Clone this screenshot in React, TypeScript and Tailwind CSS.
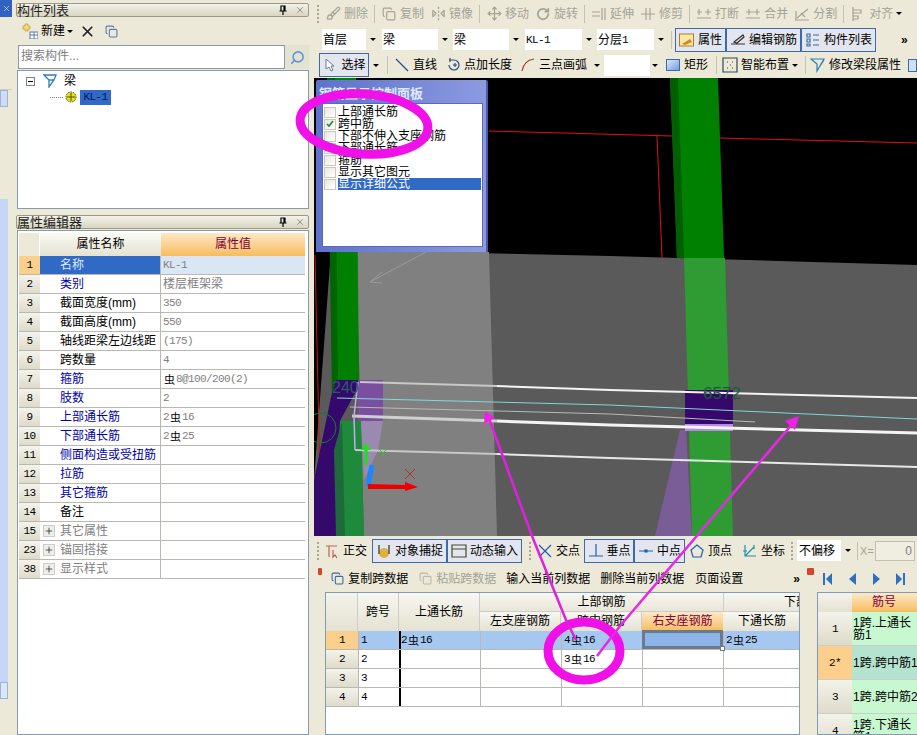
import type { ReactNode } from 'react';
import { Brush, ChevronDown, Copy, FlipHorizontal2, Move, Plus, RotateCw, Search, X } from 'lucide-react';

const FONT = "font-['Liberation_Sans','Noto_Sans_CJK_SC',sans-serif]";

function Num({ children }: { children: ReactNode }) {
  return <span className="font-['Liberation_Mono','Noto_Sans_CJK_SC',monospace] text-[11px] tracking-[-0.6px]">{children}</span>;
}

function Bar({ children }: { children: ReactNode }) {
  return <span className="font-['Noto_Sans_CJK_SC',sans-serif] text-[11px] text-black mx-[1px]">{children}</span>;
}

function Sep() {
  return <div className="w-[1px] h-[18px] shrink-0 bg-[#c4c1ac]" />;
}

function Grip() {
  return <div className="w-[2px] h-[18px] shrink-0 border-l-2 border-dotted border-[#a8a690]" />;
}

function Arrow({ className = '' }: { className?: string }) {
  return (
    <div className={`flex items-center justify-center shrink-0 ${className}`}>
      <div className="w-0 h-0 border-x-[3px] border-t-[3px] border-x-transparent border-t-black" />
    </div>
  );
}

function Tool({ icon, label, gray, className = '' }: { icon: ReactNode; label: string; gray?: boolean; className?: string }) {
  return (
    <div className={`flex items-center gap-[3px] shrink-0 whitespace-nowrap ${gray ? 'text-[#a3a396]' : 'text-black'} ${className}`}>
      <div className="w-[16px] h-[16px] flex items-center justify-center shrink-0">{icon}</div>
      <span>{label}</span>
    </div>
  );
}

function Toggle({ icon, label, className = '' }: { icon: ReactNode; label: string; className?: string }) {
  return (
    <div className={`flex items-center justify-center gap-[3px] h-[24px] shrink-0 border border-[#3f6aa8] bg-[#e3e6ee] whitespace-nowrap ${className}`}>
      <div className="w-[16px] h-[16px] flex items-center justify-center shrink-0">{icon}</div>
      <span>{label}</span>
    </div>
  );
}

function Dropdown({ label, className = '' }: { label: ReactNode; className?: string }) {
  return (
    <div className={`flex items-center h-[21px] shrink-0 ${className}`}>
      <div className="flex-1 h-full bg-white pl-[1px] flex items-center whitespace-nowrap overflow-hidden">{label}</div>
      <Arrow className="w-[14px]" />
    </div>
  );
}

function Lines({ d, color = '#a3a396' }: { d: string; color?: string }) {
  return (
    <svg width="16" height="16" viewBox="0 0 16 16" fill="none" stroke={color} strokeWidth="1.2">
      <path d={d} />
    </svg>
  );
}

function TitleBar({ title }: { title: string }) {
  return (
    <div className="h-[14px] mr-[1px] flex items-center justify-between rounded-[2px] border border-[#9a9a88] bg-gradient-to-b from-[#f4f3ea] to-[#d8d5c0] text-[13px] leading-[13px] text-[#222]">
      <span>{title}</span>
      <div className="flex items-center gap-[8px] pr-[3px]">
        <svg width="8" height="10" viewBox="0 0 8 10" fill="none" stroke="#000" strokeWidth="1.2">
          <path d="M2 1h4v5H2zM0.5 6h7M4 6v4M5 1v5" />
        </svg>
        <X size={10} strokeWidth={1.2} color="#444" />
      </div>
    </div>
  );
}

const props: { i: string; name: string; val?: ReactNode; tone: 'blue' | 'black' | 'gray'; plus?: boolean }[] = [
  { i: '1', name: '名称', val: <Num>KL-1</Num>, tone: 'black' },
  { i: '2', name: '类别', val: '楼层框架梁', tone: 'blue' },
  { i: '3', name: '截面宽度(mm)', val: <Num>350</Num>, tone: 'black' },
  { i: '4', name: '截面高度(mm)', val: <Num>550</Num>, tone: 'black' },
  { i: '5', name: '轴线距梁左边线距', val: <Num>(175)</Num>, tone: 'black' },
  { i: '6', name: '跨数量', val: <Num>4</Num>, tone: 'black' },
  { i: '7', name: '箍筋', val: <><Bar>虫</Bar><Num>8@100/200(2)</Num></>, tone: 'blue' },
  { i: '8', name: '肢数', val: <Num>2</Num>, tone: 'blue' },
  { i: '9', name: '上部通长筋', val: <><Num>2</Num><Bar>虫</Bar><Num>16</Num></>, tone: 'blue' },
  { i: '10', name: '下部通长筋', val: <><Num>2</Num><Bar>虫</Bar><Num>25</Num></>, tone: 'blue' },
  { i: '11', name: '侧面构造或受扭筋', tone: 'blue' },
  { i: '12', name: '拉筋', tone: 'blue' },
  { i: '13', name: '其它箍筋', tone: 'blue' },
  { i: '14', name: '备注', tone: 'black' },
  { i: '15', name: '其它属性', tone: 'gray', plus: true },
  { i: '23', name: '锚固搭接', tone: 'gray', plus: true },
  { i: '38', name: '显示样式', tone: 'gray', plus: true },
];

function PropertyRow({ row, active }: { row: (typeof props)[number]; active: boolean }) {
  const tone = row.tone === 'blue' ? 'text-[#0000a8]' : row.tone === 'gray' ? 'text-[#808080]' : 'text-black';
  return (
    <div className="grid grid-cols-[21px_121px_1fr] h-[19px] border-b border-[#b9b9b4] leading-[18px]">
      <div className={`flex items-center justify-center ${active ? 'bg-[#fcd08c]' : 'bg-gradient-to-b from-[#f4f3ea] to-[#dedbcb]'}`}>
        <Num>{row.i}</Num>
      </div>
      <div className={`flex items-center border-r border-[#b9b9b4] whitespace-nowrap overflow-hidden ${active ? 'bg-[#316ac5] text-[#dfe8ff] pl-[20px]' : row.plus ? 'pl-[3px]' : 'pl-[20px]'} ${active ? '' : tone}`}>
        {row.plus && (
          <div className="w-[12px] h-[12px] mr-[5px] flex items-center justify-center bg-[#eeeeea] border border-[#ccc]">
            <Plus size={10} strokeWidth={1.5} color="#000" />
          </div>
        )}
        {row.name}
      </div>
      <div className={`flex items-center pl-[2px] whitespace-nowrap text-[#808080] ${active ? 'bg-[#dbe6f4]' : ''}`}>{row.val}</div>
    </div>
  );
}

function Viewport() {
  return (
    <svg width="603" height="458" viewBox="314 78 603 458" className="block">
      <rect x="314" y="78" width="603" height="458" fill="#000" />
      <path d="M489 131L672 136M720 138L917 143M657 136L662 258" stroke="#e01010" fill="none" />
      <polygon points="331,250 610,256 917,265 917,536 314,536 314,480" fill="#5a5a5a" />
      <polygon points="356,252 489,252 497,536 364,536" fill="#808080" />
      <path d="M315 255L320 480" stroke="#d01010" fill="none" />
      <polygon points="327,78 356,78 358,380 336,380 332,397" fill="#006400" />
      <polygon points="335,78 356,78 359,380 338,380" fill="#008000" />
      <polygon points="670,78 718,78 724,258 677,258" fill="#008000" />
      <polygon points="670,78 678,78 684,258 677,258" fill="#005f00" />
      <polygon points="684,258 725,258 733,536 692,536" fill="#2e9c32" />
      <polygon points="680,430 686,430 692,536 655,536" fill="#7a5c96" />
      <polygon points="336,380 362,380 340,421 336,536 314,536 314,480 331,397" fill="#35096b" />
      <polygon points="340,421 361,421 364,536 336,536" fill="#1e8a3c" />
      <polygon points="334,450 342,421 345,536 336,536" fill="#1f6a3a" />
      <polygon points="358,380 383,380 383,421 358,421" fill="#7a4fa0" />
      <polygon points="361,421 383,421 378,450 364,480" fill="#9a8ab0" />
      <polygon points="685,390 733,390 733,431 685,431" fill="#35096b" />
      <rect x="685" y="424" width="48" height="7" fill="#b58be8" />
      <path d="M426 252L370 282M370 282L382 272M370 282L382 283" stroke="#9a9a9a" fill="none" />
      <path d="M360 382L497 386" stroke="#c8c8c8" strokeWidth="2" fill="none" />
      <path d="M497 386L610 390L917 398" stroke="#f4f4f4" strokeWidth="2" fill="none" />
      <path d="M337 398L610 405L917 419" stroke="#7fd8d8" fill="none" />
      <path d="M350 407L610 414L755 422" stroke="#b8b8b8" fill="none" />
      <path d="M352 416L497 421" stroke="#cfcfcf" strokeWidth="3" fill="none" />
      <path d="M497 421L610 425L917 433" stroke="#f4f4f4" strokeWidth="3" fill="none" />
      <path d="M355 450L497 454" stroke="#c8c8c8" strokeWidth="2" fill="none" />
      <path d="M497 454L610 458L917 467" stroke="#e8e8e8" strokeWidth="2" fill="none" />
      <path d="M358 382L354 416L355 450" stroke="#c8a8f0" strokeWidth="1.5" fill="none" />
      <text x="332" y="393" fontSize="16" fill="#2a5a6a">240</text>
      <text x="703" y="399" fontSize="17" fill="#1e5a3a">6572</text>
      <polygon points="366,443 371,450 361,450" fill="#22dd22" />
      <path d="M366 450V465" stroke="#22dd22" strokeWidth="3" />
      <path d="M368 486L372 465" stroke="#1a86ff" strokeWidth="5" />
      <polygon points="368,484 405,485 405,482 418,487 405,491 405,489 368,489" fill="#ee0000" />
      <path d="M405 469L415 479M415 469L405 479" stroke="#b03030" />
      <path d="M379 449L383 453L387 449M383 453V456" stroke="#22cc22" fill="none" />
      <circle cx="321" cy="428" r="15" stroke="#1a7a3a" fill="none" />
    </svg>
  );
}

const spans = ['1', '2', '3', '4'];

export default function App() {
  return (
    <div className={`relative flex w-[917px] h-[735px] overflow-hidden bg-[#ece9d8] text-[12px] leading-[14px] text-black ${FONT}`}>
      {/* left edge sliver */}
      <div className="w-[16px] shrink-0 flex flex-col">
        <div className="w-[12px] h-[17px] bg-[#2f62c4] flex items-center justify-center">
          <X size={9} color="#fff" strokeWidth={1.5} />
        </div>
        <div className="w-[12px] h-[73px] bg-[#ece9d8] border-b border-[#cfccb8]" />
        <div className="w-[8px] h-[17px] bg-[#cfdcf4] border border-[#9db3d6]" />
        <div className="w-[8px] h-[92px] bg-[#ece9d8]" />
        <div className="w-[8px] h-[483px] bg-[#c5d6f6]" />
        <div className="w-[8px] h-[17px] bg-[#dbe6f8] border border-[#9db3d6]" />
      </div>

      {/* component list + property editor */}
      <div className="w-[294px] shrink-0 flex flex-col pt-[3px]">
        <TitleBar title="构件列表" />
        <div className="h-[28px] flex items-center pl-[6px]">
          <svg width="16" height="16" viewBox="0 0 16 16">
            <path d="M3 1h3v2h2v3H6v2H3V6H1V3h2z" fill="#f4d870" stroke="#b09030" strokeWidth="0.6" />
            <rect x="8" y="9" width="8" height="7" fill="#fff" stroke="#5a7ab0" />
            <path d="M8 12h8M12 9v7" stroke="#5a7ab0" />
          </svg>
          <span className="ml-[3px]">新建</span>
          <Arrow className="w-[8px] ml-[1px]" />
          <X size={17} strokeWidth={2.4} color="#222" className="ml-[5px]" />
          <Copy size={13} color="#5a7ab0" className="ml-[9px]" />
        </div>
        <div className="h-[24px] flex mr-[1px] pl-[2px]">
          <div className="w-[267px] bg-white border border-[#8a9aa8] pl-[2px] leading-[20px] text-[#808080]">搜索构件...</div>
          <div className="flex-1 flex items-center justify-center bg-[#e4e2d2]">
            <Search size={15} strokeWidth={2.5} color="#5b9ad4" className="-scale-x-100" />
          </div>
        </div>
        <div className="h-[139px] mt-[1px] ml-[1px] mr-[1px] bg-white border border-[#8a9aa8] pt-[2px]">
          <div className="flex items-center h-[16px] pl-[8px]">
            <div className="w-[9px] h-[9px] border border-[#808080] flex items-center justify-center">
              <div className="w-[5px] h-[1px] bg-black" />
            </div>
            <svg width="14" height="14" viewBox="0 0 14 14" fill="none" stroke="#2f7fb8" strokeWidth="1.3" className="ml-[8px]">
              <path d="M1 1h12l-2 5-5 7V6zM1 1l5 5M11 6H6" />
            </svg>
            <span className="ml-[7px]">梁</span>
          </div>
          <div className="flex items-center h-[16px] pl-[32px]">
            <div className="w-[13px] border-t border-dotted border-[#808080]" />
            <svg width="12" height="12" viewBox="0 0 12 12" className="ml-[2px]">
              <circle cx="6" cy="6" r="5" fill="#e8e020" stroke="#505010" strokeDasharray="1.5 1" />
              <path d="M2 6h8M6 2v8" stroke="#505010" />
            </svg>
            <div className="ml-[3px] w-[31px] h-[15px] bg-[#316ac5] flex items-center justify-center text-[#001060]">
              <Num>KL-1</Num>
            </div>
          </div>
        </div>
        <div className="mt-[6px]">
          <TitleBar title="属性编辑器" />
        </div>
        <div className="flex-1 ml-[1px] mr-[1px] mt-[1px] bg-white border border-[#8a9aa8] pl-[1px] pr-[3px] pt-[2px]">
          <div className="grid grid-cols-[21px_121px_1fr] h-[23px] leading-[23px] text-center">
            <div className="bg-[#ece9d8] border-r border-white" />
            <div className="bg-gradient-to-b from-[#fafaf4] to-[#e4e2d2]">属性名称</div>
            <div className="bg-gradient-to-b from-[#fde8c4] to-[#f6bc5c] text-[#800040]">属性值</div>
          </div>
          {props.map((row, idx) => (
            <PropertyRow key={row.i} row={row} active={idx === 0} />
          ))}
        </div>
      </div>

      {/* right side */}
      <div className="w-[607px] ml-[3px] -mr-[3px] shrink-0 flex flex-col">
        <div className="h-[27px] flex items-center pl-[4px] gap-[6px] text-[#a3a396]">
          <Grip />
          <Tool gray label="删除" icon={<Brush size={15} color="#a3a396" />} />
          <Sep />
          <Tool gray label="复制" icon={<Copy size={14} color="#a3a396" />} />
          <Tool gray label="镜像" icon={<FlipHorizontal2 size={15} color="#a3a396" />} />
          <Sep />
          <Tool gray label="移动" icon={<Move size={15} color="#a3a396" />} />
          <Tool gray label="旋转" icon={<RotateCw size={14} color="#a3a396" strokeWidth={3} />} />
          <Sep />
          <Tool gray label="延伸" icon={<Lines d="M1 6h8M1 10h8M11 2v12M14 2v12" />} />
          <Tool gray label="修剪" icon={<Lines d="M1 8h14M6 2v12M10 2v12" />} />
          <Sep />
          <Tool gray label="打断" icon={<Lines d="M1 6h5M9 6h6M1 12h14M3 3v6M12 3v6" />} />
          <Tool gray label="合并" icon={<Lines d="M1 6h14M1 12h14M4 3v6M12 3v6" />} />
          <Tool gray label="分割" icon={<Lines d="M1 14h14M2 14V5M3 12L14 3M7 7l4 4" />} />
          <Sep />
          <Tool gray label="对齐" icon={<Lines d="M3 1v14M3 4h8v3H3M3 10h5v3H3" />} />
          <Arrow className="w-[6px] -ml-[3px]" />
        </div>

        <div className="h-[25px] flex items-center pl-[9px]">
          <Dropdown className="w-[58px]" label="首层" />
          <Dropdown className="w-[70px] ml-[2px]" label="梁" />
          <Dropdown className="w-[70px] ml-[1px]" label="梁" />
          <Dropdown className="w-[71px] ml-[2px]" label={<Num>KL-1</Num>} />
          <Dropdown className="w-[71px] ml-[1px]" label={<>分层<Num>1</Num></>} />
          <div className="ml-[3px]"><Sep /></div>
          <Toggle className="w-[51px] ml-[3px]" label="属性" icon={<svg width="16" height="14" viewBox="0 0 16 14"><rect x="0.5" y="1" width="14" height="12" fill="#fbe8a8" stroke="#a88030" /><path d="M3 11l8-5 2 3-7 3z" fill="#d08a20" /></svg>} />
          <Toggle className="w-[75px]" label="编辑钢筋" icon={<Lines color="#333" d="M1 12h14M4 10L13 3l1 2-7 6z" />} />
          <Toggle className="w-[75px]" label="构件列表" icon={<Lines color="#3a6aa8" d="M2 2h3v3H2zM2 7h3v3H2zM2 12h3v2H2zM8 3h6M8 8h6M8 13h6" />} />
          <span className="ml-[25px] font-bold text-[12px]">»</span>
        </div>

        <div className="h-[26px] flex items-center pl-[6px]">
          <Toggle className="w-[50px]" label="选择" icon={<svg width="12" height="14" viewBox="0 0 12 14"><path d="M2 1v10l3-2 2 4 2-1-2-4h3z" fill="#fff" stroke="#6a7a9a" /></svg>} />
          <Arrow className="w-[14px]" />
          <div className="ml-[4px]"><Sep /></div>
          <Tool className="ml-[6px]" label="直线" icon={<Lines color="#274f85" d="M2 2l12 12" />} />
          <Tool className="ml-[8px]" label="点加长度" icon={<Lines color="#274f85" d="M4 3h5a5 5 0 1 1-5 5M8 8h4M10 6v4M5 1v4" />} />
          <Tool className="ml-[8px]" label="三点画弧" icon={<Lines color="#a04030" d="M2 14C3 8 7 3 14 2" />} />
          <Arrow className="w-[8px] ml-[6px]" />
          <div className="w-[46px] h-[21px] ml-[3px] bg-white" />
          <Arrow className="w-[10px]" />
          <Tool className="ml-[5px]" label="矩形" icon={<div className="w-[14px] h-[12px] border border-[#3a6aa8] bg-gradient-to-br from-[#dbe8fa] to-[#6f9fe0]" />} />
          <div className="ml-[8px]"><Sep /></div>
          <Tool className="ml-[5px]" label="智能布置" icon={<Lines color="#2a4a5a" d="M1 1h14v14H1zM5 5h1M10 5h1M8 8h1M5 11h1M10 11h1" />} />
          <Arrow className="w-[8px] ml-[2px]" />
          <div className="ml-[6px]"><Sep /></div>
          <Tool className="ml-[4px]" label="修改梁段属性" icon={<Lines color="#2f7fb8" d="M1 2h13l-3 5-4 7V7zM1 2l6 5M8 12l6-9" />} />
          <div className="ml-[7px] w-[9px] h-[13px] border border-[#3a6aa8] bg-[#cfe0f6]" />
        </div>

        <div className="relative h-[458px] ml-[1px] shrink-0 overflow-hidden">
          <Viewport />
          {/* rebar display panel */}
          <div className="absolute left-[2px] top-[2px] w-[172px] h-[172px] flex flex-col bg-gradient-to-r from-[#5f72cc] to-[#8c9ae0] pl-[6px] pr-[3px] pb-[5px] rounded-t-[2px] border-r-2 border-[#4a5ab0]">
            <div className="h-[21px] flex items-end whitespace-nowrap text-[13px] font-bold text-[#dfe8ff] -ml-[3px]">钢筋显示控制面板</div>
            <div className="flex-1 bg-white border border-[#5a6ab8] pt-[2px] pl-[1px] pr-[1px] mt-[2px]">
              {['上部通长筋', '跨中筋', '下部不伸入支座钢筋', '下部通长筋', '箍筋', '显示其它图元', '显示详细公式'].map((t, i) => (
                <div key={t} className="flex items-center h-[12px] leading-[12px] whitespace-nowrap">
                  <div className="w-[12px] h-[11px] mr-[2px] shrink-0 border border-[#c8c8c0] bg-gradient-to-br from-[#e8e8e0] to-white flex items-center justify-center">
                    {i === 1 && (
                      <svg width="8" height="8" viewBox="0 0 8 8" fill="none" stroke="#1a8a2a" strokeWidth="1.6">
                        <path d="M1 4l2 2 4-5" />
                      </svg>
                    )}
                  </div>
                  <div className={`flex-1 ${i === 6 ? 'bg-[#316ac5] text-white' : ''}`}>{t}</div>
                </div>
              ))}
            </div>
          </div>
        </div>

        {/* snap toolbar */}
        <div className="h-[29px] flex items-center pl-[4px] shrink-0">
          <Grip />
          <Tool className="ml-[5px]" label="正交" icon={<Lines color="#c06050" d="M2 3h11M5 3v11M9 7v7l2-2 2 3" />} />
          <Toggle className="w-[75px] ml-[5px]" label="对象捕捉" icon={<svg width="16" height="16" viewBox="0 0 16 16"><circle cx="8" cy="10" r="5" fill="#e0b040" /><path d="M3 2v9M13 2v9" stroke="#40502a" strokeWidth="1.4" /></svg>} />
          <Toggle className="w-[75px]" label="动态输入" icon={<Lines color="#40502a" d="M1 2h14v12H1zM1 6h14" />} />
          <div className="ml-[7px]"><Grip /></div>
          <Tool className="ml-[6px]" label="交点" icon={<Lines color="#1f5fb0" d="M2 2l12 12M14 2L2 14" />} />
          <Toggle className="w-[50px] ml-[4px]" label="垂点" icon={<Lines color="#1f5fb0" d="M1 13h14M8 1v12" />} />
          <Toggle className="w-[51px]" label="中点" icon={<Lines color="#1f5fb0" d="M1 8h14M7 7h2v2H7z" />} />
          <Tool className="ml-[4px]" label="顶点" icon={<Lines color="#1f5fb0" d="M8 2l6 5-2 7H4L2 7z" />} />
          <Tool className="ml-[10px]" label="坐标" icon={<Lines color="#1f8fb0" d="M3 2v11h11M3 13l9-9M12 2v4M1 8h4" />} />
          <div className="ml-[6px]"><Grip /></div>
          <div className="w-[44px] h-[21px] ml-[4px] bg-white flex items-center pl-[2px]">不偏移</div>
          <Arrow className="w-[14px]" />
          <div className="ml-[2px]"><Sep /></div>
          <span className="ml-[2px] text-[#a3a396] text-[11px]">X=</span>
          <div className="w-[40px] h-[20px] ml-[1px] border border-[#c4c1ac] bg-[#f0eee0] text-right pr-[2px] text-[#808080] leading-[18px] shrink-0">0</div>
        </div>

        {/* bottom panels */}
        <div className="flex-1 flex min-h-0 overflow-hidden">
          <div className="w-[495px] shrink-0 flex flex-col pl-[12px] pr-[8px]">
            <div className="h-[27px] flex items-center shrink-0 -ml-[9px] pl-[2px]">
              <div className="w-[7px] h-[7px] -mt-[14px] rounded-[1px] bg-[#d8432c]" />
              <Tool className="ml-[7px] gap-[1px]" label="复制跨数据" icon={<Copy size={13} color="#3a6aa8" />} />
              <Tool gray className="ml-[9px] gap-[2px]" label="粘贴跨数据" icon={<Copy size={13} color="#b8b8ac" />} />
              <span className="ml-[10px] whitespace-nowrap">输入当前列数据</span>
              <span className="ml-[10px] whitespace-nowrap">删除当前列数据</span>
              <span className="ml-[11px] whitespace-nowrap">页面设置</span>
              <span className="ml-[50px] font-bold">»</span>
            </div>
            <div className="flex-1 min-h-0 bg-white border border-[#7f9db9] overflow-hidden">
              <div className="grid grid-cols-[32px_41px_81px_81px_81px_81px_78px] grid-rows-[19px_19px] text-center">
                <div className="row-span-2 bg-gradient-to-b from-[#f4f3ea] to-[#e4e2d2] border-r border-[#ccc]" />
                <div className="row-span-2 bg-gradient-to-b from-[#f8f7f0] to-[#e4e2d2] border-r border-[#ccc] flex items-center justify-center">跨号</div>
                <div className="row-span-2 bg-gradient-to-b from-[#f8f7f0] to-[#e4e2d2] border-r border-[#ccc] flex items-center justify-center">上通长筋</div>
                <div className="col-span-3 bg-gradient-to-b from-[#f8f7f0] to-[#e8e6d8] border-b border-[#ccc] leading-[18px]">上部钢筋</div>
                <div className="bg-gradient-to-b from-[#f8f7f0] to-[#e8e6d8] border-b border-l border-[#ccc] leading-[18px] text-left pl-[60px] whitespace-nowrap overflow-hidden">下部钢筋</div>
                <div className="bg-gradient-to-b from-[#f8f7f0] to-[#e4e2d2] border-r border-[#ccc] leading-[19px]">左支座钢筋</div>
                <div className="bg-gradient-to-b from-[#f8f7f0] to-[#e4e2d2] border-r border-[#ccc] leading-[19px]">跨中钢筋</div>
                <div className="bg-gradient-to-b from-[#fde8c4] to-[#f6bc5c] text-[#800040] leading-[19px]">右支座钢筋</div>
                <div className="bg-gradient-to-b from-[#f8f7f0] to-[#e4e2d2] leading-[19px]">下通长筋</div>
              </div>
              {spans.map((n, i) => (
                <div key={n} className={`grid grid-cols-[32px_41px_81px_81px_81px_81px_78px] h-[19px] border-b border-[#b9b9b4] ${i === 0 ? 'bg-[#a6c8f0]' : ''}`}>
                  <div className={`flex items-center justify-center ${i === 0 ? 'bg-[#fcd08c]' : 'bg-gradient-to-b from-[#f4f3ea] to-[#dedbcb]'}`}><Num>{n}</Num></div>
                  <div className="flex items-center pl-[2px] border-l border-[#b9b9b4]"><Num>{n}</Num></div>
                  <div className="flex items-center border-l-2 border-black">
                    {i === 0 && <><Num>2</Num><Bar>虫</Bar><Num>16</Num></>}
                  </div>
                  <div className="border-l border-[#b9b9b4]" />
                  <div className="flex items-center pl-[2px] border-l border-[#b9b9b4]">
                    {i === 0 && <><Num>4</Num><Bar>虫</Bar><Num>16</Num></>}
                    {i === 1 && <><Num>3</Num><Bar>虫</Bar><Num>16</Num></>}
                  </div>
                  <div className={i === 0 ? 'relative border-[3px] border-[#6b7a8c] bg-[#8cb4e8] -mt-[1px]' : 'border-l border-[#b9b9b4]'}>
                    {i === 0 && <div className="absolute -right-[5px] -bottom-[5px] w-[5px] h-[5px] bg-white border border-[#6b7a8c]" />}
                  </div>
                  <div className="flex items-center pl-[2px] border-l border-[#b9b9b4]">
                    {i === 0 && <><Num>2</Num><Bar>虫</Bar><Num>25</Num></>}
                  </div>
                </div>
              ))}
            </div>
          </div>

          <div className="flex-1 flex flex-col pl-[9px] min-w-0">
            <div className="h-[27px] flex items-center shrink-0 -ml-[10px]">
              <div className="w-[7px] h-[7px] -mt-[14px] rounded-[1px] bg-[#d8432c]" />
              <svg width="9" height="12" viewBox="0 0 9 12" fill="#2f6fc0" className="ml-[9px]"><path d="M0 0h2v12H0zM9 0v12L3 6z" /></svg>
              <svg width="7" height="12" viewBox="0 0 7 12" fill="#2f6fc0" className="ml-[17px]"><path d="M7 0v12L0 6z" /></svg>
              <svg width="7" height="12" viewBox="0 0 7 12" fill="#2f6fc0" className="ml-[17px]"><path d="M0 0v12l7-6z" /></svg>
              <svg width="9" height="12" viewBox="0 0 9 12" fill="#2f6fc0" className="ml-[16px]"><path d="M7 0h2v12H7zM0 0v12l6-6z" /></svg>
            </div>
            <div className="flex-1 min-h-0 w-[120px] bg-white border border-[#7f9db9] overflow-hidden">
              <div className="grid grid-cols-[34px_1fr] h-[19px] text-center leading-[19px]">
                <div className="bg-gradient-to-b from-[#f4f3ea] to-[#e4e2d2]" />
                <div className="bg-gradient-to-b from-[#fde8c4] to-[#f6bc5c] text-[#800040] pr-[20px]">筋号</div>
              </div>
              {['1跨.上通长筋1', '1跨.跨中筋1', '1跨.跨中筋2', '1跨.下通长筋1'].map((t, i) => (
                <div key={t} className="grid grid-cols-[34px_1fr] h-[34px] border-b border-[#ccc]">
                  <div className={`flex items-center justify-center ${i === 1 ? 'bg-[#fcd08c]' : 'bg-gradient-to-b from-[#f4f3ea] to-[#dedbcb]'}`}><Num>{i === 1 ? '2*' : i + 1}</Num></div>
                  <div className={`flex items-center pl-[1px] leading-[12px] ${i === 1 ? 'bg-[#b4e4d0]' : 'bg-[#c8f8d0]'} ${i === 0 || i === 3 ? 'w-[66px]' : 'whitespace-nowrap'}`}>{t}</div>
                </div>
              ))}
            </div>
          </div>
        </div>
      </div>

      {/* hand-drawn annotations over the screenshot */}
      <svg className="absolute inset-0 pointer-events-none" width="917" height="735" viewBox="0 0 917 735" fill="none">
        <ellipse cx="364" cy="124" rx="64" ry="30" stroke="#f010e8" strokeWidth="9" transform="rotate(4 364 124)" />
        <ellipse cx="584" cy="651" rx="36" ry="29" stroke="#f010e8" strokeWidth="9" />
        <path d="M488 416L532 536L566 620L576 640" stroke="#e020e0" strokeWidth="2.5" />
        <polygon points="485,411 495,418 484,424" fill="#f020e8" />
        <path d="M794 422L620 626L597 656" stroke="#e828e8" strokeWidth="2.5" />
        <polygon points="799,416 795,430 785,421" fill="#f020e8" />
      </svg>
    </div>
  );
}
